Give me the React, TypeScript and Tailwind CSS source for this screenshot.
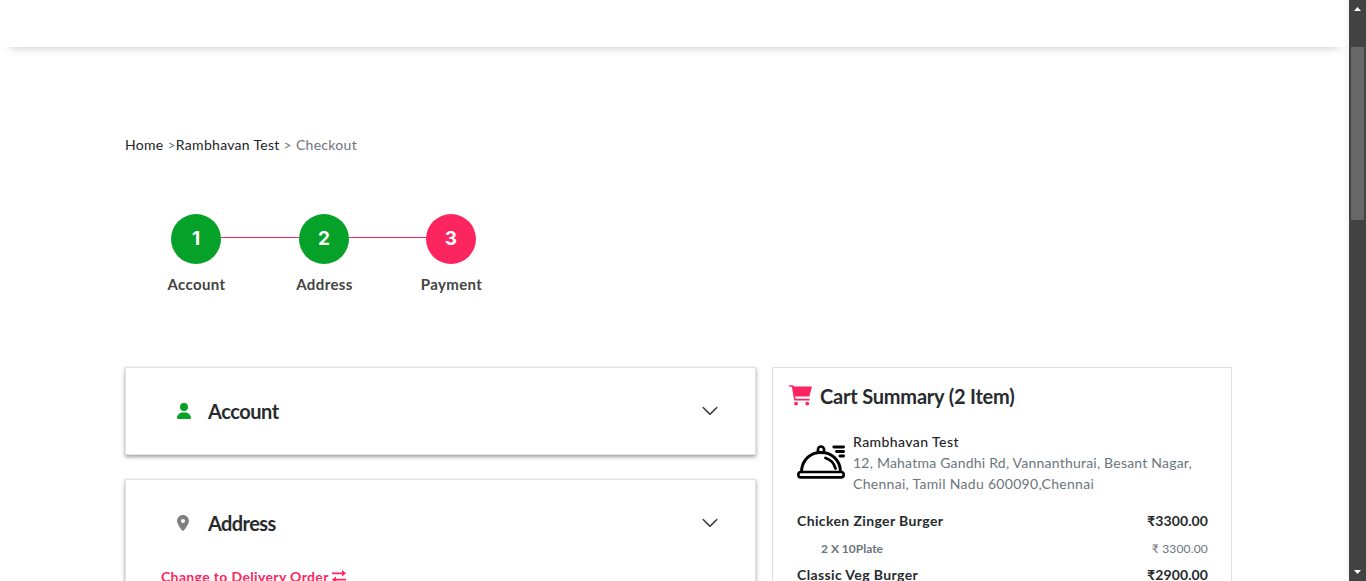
import { FaUser, FaLocationDot } from "react-icons/fa6";
import { BsChevronDown } from "react-icons/bs";

function Step({ n, label, tone }: { n: string; label: string; tone: string }) {
  return (
    <div className="flex w-[70px] flex-col items-center">
      <div className={`flex size-[50px] items-center justify-center rounded-full pt-px text-[19px] font-bold text-white font-['Inter',sans-serif] ${tone}`}>{n}</div>
      <div className="mt-[9px] ml-px whitespace-nowrap text-[15px] leading-[22px] font-bold tracking-[0.38px] text-[#444]">{label}</div>
    </div>
  );
}

function Dish() {
  return (
    <svg className="h-[34px] w-[48px] shrink-0" viewBox="0 0 48 34" fill="none" stroke="#000" strokeLinecap="round">
      <rect x="1.3" y="27" width="45.4" height="5.400" rx="2.700" strokeWidth="2.600" />
      <path d="M4.500 26.500C5 14 14 7.500 24 7.500s19 6.500 19.500 19" strokeWidth="3" />
      <path d="M21 7V4.500a3 3 0 0 1 6 0V7" strokeWidth="2.700" />
      <path d="M28.500 13c5 1.500 8.500 5 10 10.500M36.800 2H46.600M39.500 6.500h7.100M43 11h3.600" strokeWidth="2.800" />
    </svg>
  );
}

function Cart() {
  return (
    <svg className="h-[21px] w-[23px] shrink-0 fill-[#fd2560]" viewBox="0 0 23 21">
      <path d="M0.700 0.300H4.300L5 1.600H23L20.300 11.500H6L6.500 13.800H20.600V15.400H5.200L2.900 1.700H0.700A0.700 0.700 0 0 1 0.700 0.300Z" />
      <circle cx="7" cy="18.600" r="1.900" />
      <circle cx="18.300" cy="18.600" r="1.900" />
    </svg>
  );
}

function Swap() {
  return (
    <svg className="mb-[2px] h-[13px] w-[14px] shrink-0 fill-[#fd2560]" viewBox="0 0 14 13">
      <path d="M0 2.500H10V0L14 3.300L10 6.500V4.200H0ZM14 8.800H4V6.500L0 9.700L4 13V10.500H14Z" />
    </svg>
  );
}

export default function App() {
  return (
    <div className="flex h-[581px] w-full overflow-hidden bg-white text-[#282b2e] font-['Lato','Noto_Sans',sans-serif]">
      <div className="flex min-w-0 flex-1 flex-col">
        <header className="h-[47px] shrink-0 bg-white shadow-[0_10px_10px_-10px_rgba(0,0,0,0.25)]" />
        <main className="pl-[125px]">
          <nav className="mt-[87px] whitespace-pre text-[14px] leading-[22px] tracking-[0.3px] text-[#6c757d]">
            <span className="text-[#212529]">Home</span> &gt;<span className="text-[#212529]">Rambhavan Test</span> &gt; Checkout
          </nav>
          <div className="mt-[58px] ml-[36px] flex h-[153px] items-start">
            <Step n="1" label="Account" tone="bg-[#06a128]" />
            <div className="-mx-[10px] mt-[23px] h-px w-[78px] bg-[#fd2560]" />
            <Step n="2" label="Address" tone="bg-[#06a128]" />
            <div className="-mx-[10px] mt-[23px] h-px w-[77px] bg-[#fd2560]" />
            <Step n="3" label="Payment" tone="bg-[#fd2560]" />
          </div>
          <div className="flex items-start gap-[16px]">
            <div className="flex w-[631px] flex-col gap-[24px]">
              <section className="flex h-[88px] items-center border border-[#dee2e6] bg-white pr-[36px] pl-[50px] shadow-[0_2px_4px_rgba(0,0,0,0.38)]">
                <FaUser className="size-[16px] text-[#06a128]" />
                <h2 className="ml-[16px] flex-1 text-[20px] font-bold tracking-[-0.45px]">Account</h2>
                <BsChevronDown className="size-[18px] stroke-[0.4]" />
              </section>
              <section className="h-[180px] border border-[#dee2e6] bg-white shadow-[0_2px_4px_rgba(0,0,0,0.38)]">
                <div className="flex h-[86px] items-center pr-[36px] pl-[49px]">
                  <FaLocationDot className="size-[16px] text-[#808080]" />
                  <h2 className="ml-[17px] flex-1 text-[20px] font-bold tracking-[-0.6px]">Address</h2>
                  <BsChevronDown className="size-[18px] stroke-[0.4]" />
                </div>
                <div className="flex items-center gap-[3px] pl-[35px] text-[14px] leading-[22px] font-bold text-[#fd2560]">
                  <span className="tracking-[0.36px]">Change to Delivery Order</span>
                  <Swap />
                </div>
              </section>
            </div>
            <aside className="h-[300px] w-[460px] border border-[#dee2e6] bg-white text-[14px] leading-[21px]">
              <div className="flex h-[56px] items-center pl-[16px]">
                <div className="pb-px"><Cart /></div>
                <h2 className="ml-[8px] text-[20px] font-bold tracking-[-0.2px]">Cart Summary (2 Item)</h2>
              </div>
              <div className="mt-[7px] flex pl-[24px]">
                <div className="mt-[14px]"><Dish /></div>
                <div className="ml-[8px] whitespace-nowrap text-[#6c757d]">
                  <div className="font-medium tracking-[0.42px]">
                    <span className="text-[#212529]">Rambhavan Test</span>
                  </div>
                  <div className="tracking-[0.22px]">12, Mahatma Gandhi Rd, Vannanthurai, Besant Nagar,</div>
                  <div className="tracking-[0.3px]">Chennai, Tamil Nadu 600090,Chennai</div>
                </div>
              </div>
              <div className="mt-[16px] flex justify-between pr-[23px] pl-[24px] font-bold"><span className="tracking-[0.38px]">Chicken Zinger Burger</span><span className="tracking-[0.1px]">₹3300.00</span></div>
              <div className="mt-[7px] flex justify-between pr-[23px] pl-[48px] text-[12px] text-[#6c757d]"><b>2 X 10Plate</b><span className="tracking-[0.18px]">₹ 3300.00</span></div>
              <div className="mt-[5px] flex justify-between pr-[23px] pl-[24px] font-bold"><span className="tracking-[0.38px]">Classic Veg Burger</span><span className="tracking-[0.1px]">₹2900.00</span></div>
            </aside>
          </div>
        </main>
      </div>
      <div className="flex w-[17px] shrink-0 flex-col items-center bg-[#424242] shadow-[0_0_10px_rgba(0,0,0,0.08)]">
        <svg className="mt-[7px] h-[4px] w-[7px]" viewBox="0 0 7 4" fill="#fff"><path d="M0 4L3.500 0L7 4Z" /></svg>
        <div className="mt-[36px] h-[173px] w-[13px] bg-[#686868]" />
        <svg className="mt-auto mb-[7px] h-[4px] w-[7px]" viewBox="0 0 7 4" fill="#fff"><path d="M0 0L3.500 4L7 0Z" /></svg>
      </div>
    </div>
  );
}
